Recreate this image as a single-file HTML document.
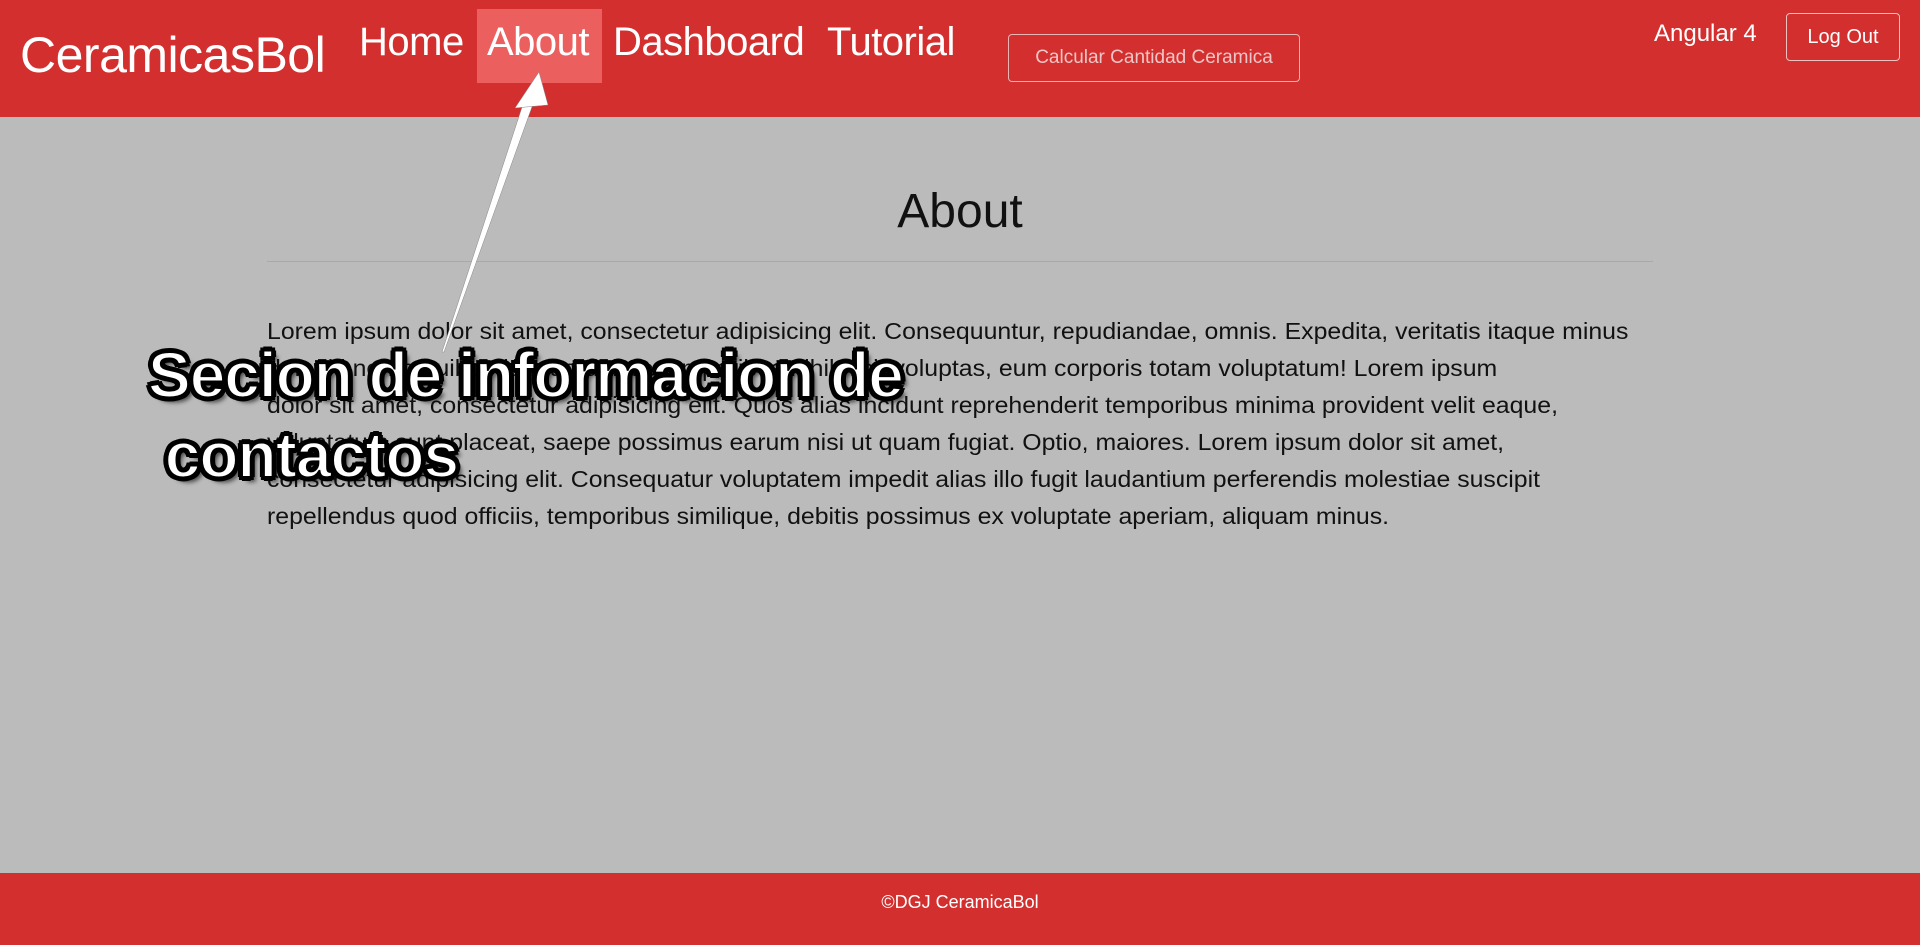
<!DOCTYPE html>
<html><head><meta charset="utf-8"><style>
*{margin:0;padding:0;box-sizing:border-box}
body{width:1920px;height:945px;overflow:hidden;background:#bbbbbb;font-family:"Liberation Sans",sans-serif;position:relative}
.hdr{position:absolute;left:0;top:0;width:1920px;height:117px;background:#d32f2f}
.brand{position:absolute;left:20px;top:26px;font-size:50px;color:#fff;letter-spacing:-0.5px}
.nav{position:absolute;top:20px;font-size:40px;color:#fff;letter-spacing:-0.5px}
.hl{position:absolute;left:477px;top:9px;width:125px;height:74px;background:#ec5f5f}
.calc{position:absolute;left:1008px;top:34px;width:292px;height:48px;border:1px solid #e8b4b4;border-radius:4px;color:#ecc6c6;font-size:19px;text-align:center;line-height:46px}
.ang{position:absolute;left:1654px;top:20px;font-size:24px;color:#fff}
.lo{position:absolute;left:1786px;top:13px;width:114px;height:48px;border:1px solid #f0c0c0;border-radius:4px;color:#fff;font-size:20px;text-align:center;line-height:46px}
h1{position:absolute;left:0;width:1920px;top:184px;text-align:center;font-weight:normal;font-size:48px;color:#111}
.hr{position:absolute;left:267px;top:261px;width:1386px;height:1px;background:#a9a9a9}
.p{position:absolute;left:267px;top:313px;font-size:23px;line-height:37px;color:#111;white-space:nowrap;transform:scaleX(1.08);transform-origin:0 0}
.ft{position:absolute;left:0;top:873px;width:1920px;height:72px;background:#d32f2f;color:#fff;text-align:center;font-size:18px;line-height:58px}
.ann{position:absolute;left:148px;top:335px;font-size:64px;font-weight:bold;color:#fff;line-height:80px;letter-spacing:-1px;-webkit-text-stroke:2px #000;text-shadow:3px 3px 0 #000,-3px -3px 0 #000,3px -3px 0 #000,-3px 3px 0 #000,0 4px 0 #000,4px 0 0 #000,0 -4px 0 #000,-4px 0 0 #000,5px 5px 4px rgba(0,0,0,.6)}
</style></head><body>
<div class="hdr"></div>
<div class="hl"></div>
<div class="brand">CeramicasBol</div>
<div class="nav" style="left:359px">Home</div>
<div class="nav" style="left:487px">About</div>
<div class="nav" style="left:613px">Dashboard</div>
<div class="nav" style="left:827px">Tutorial</div>
<div class="calc">Calcular Cantidad Ceramica</div>
<div class="ang">Angular 4</div>
<div class="lo">Log Out</div>
<h1>About</h1>
<div class="hr"></div>
<div class="p">Lorem ipsum dolor sit amet, consectetur adipisicing elit. Consequuntur, repudiandae, omnis. Expedita, veritatis itaque minus<br>deleniti nemo quibusdam ad dolore temporibus nihil nisi, voluptas, eum corporis totam voluptatum! Lorem ipsum<br>dolor sit amet, consectetur adipisicing elit. Quos alias incidunt reprehenderit temporibus minima provident velit eaque,<br>voluptatum sunt placeat, saepe possimus earum nisi ut quam fugiat. Optio, maiores. Lorem ipsum dolor sit amet,<br>consectetur adipisicing elit. Consequatur voluptatem impedit alias illo fugit laudantium perferendis molestiae suscipit<br>repellendus quod officiis, temporibus similique, debitis possimus ex voluptate aperiam, aliquam minus.</div>
<svg style="position:absolute;left:0;top:0" width="1920" height="945"><polygon points="442,352 444,352 533,104 524,101" fill="#fff" stroke="#888" stroke-width="0.5"/><polygon points="539,72 515,108 548,105" fill="#fff" stroke="#888" stroke-width="0.5"/></svg>
<div class="ann">Secion de informacion de<br>&nbsp;contactos</div>
<div class="ft">©DGJ CeramicaBol</div>
</body></html>
